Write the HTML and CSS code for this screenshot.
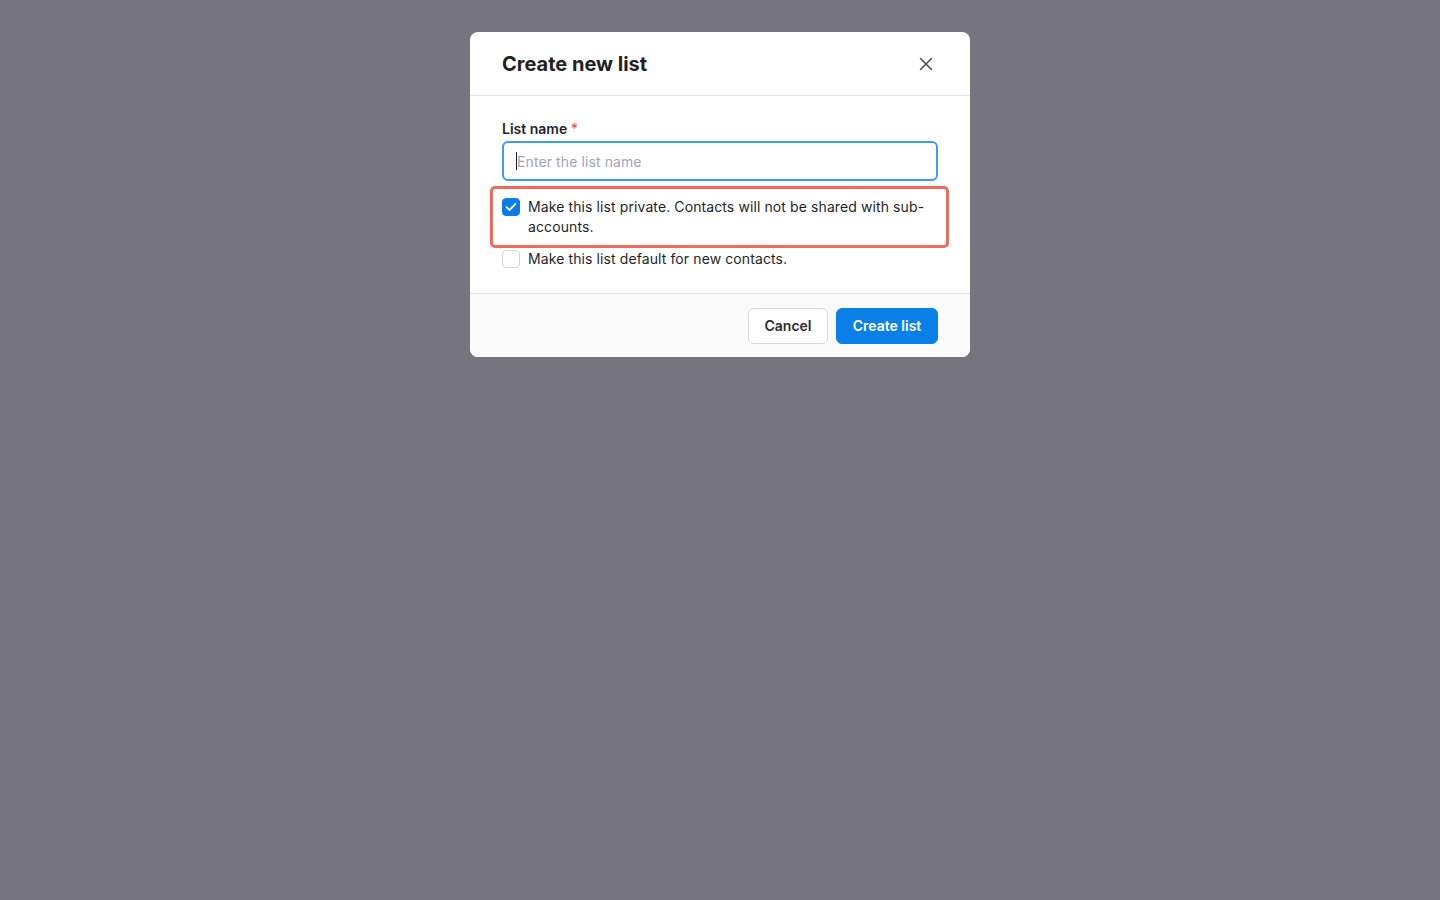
FILE: index.html
```html
<!DOCTYPE html>
<html lang="en">
<head>
<meta charset="utf-8">
<title>Create new list</title>
<link rel="stylesheet" href="styles.css">
</head>
<body>
<div class="overlay">
  <div class="modal">
    <div class="modal-header">
      <h2 class="modal-title">Create new list</h2>
      <button class="close-btn" aria-label="Close">
        <svg width="14" height="14" viewBox="0 0 14 14"><path d="M1.5 1.5 L12.5 12.5 M12.5 1.5 L1.5 12.5" stroke="#474761" stroke-width="1.5" stroke-linecap="round" fill="none"/></svg>
      </button>
    </div>
    <div class="modal-body">
      <label class="field-label">List name <span class="req">*</span></label>
      <div class="input"><span class="caret"></span><span class="placeholder">Enter the list name</span></div>
      <div class="options">
        <div class="check-row">
          <span class="box checked">
            <svg width="12" height="10" viewBox="0 0 12 10"><path d="M1.5 5.2 L4.5 8 L10.5 1.8" stroke="#fff" stroke-width="1.8" fill="none" stroke-linecap="round" stroke-linejoin="round"/></svg>
          </span>
          <span class="check-text">Make this list private. Contacts will not be shared with sub-accounts.</span>
          <span class="highlight"></span>
        </div>
        <div class="check-row">
          <span class="box"></span>
          <span class="check-text">Make this list default for new contacts.</span>
        </div>
      </div>
    </div>
    <div class="modal-footer">
      <button class="btn btn-secondary">Cancel</button>
      <button class="btn btn-primary">Create list</button>
    </div>
  </div>
</div>
</body>
</html>
```
FILE: styles.css
```css
* { box-sizing: border-box; }
html, body { margin: 0; padding: 0; }
body {
  font-family: Inter, "Noto Sans", "Liberation Sans", sans-serif;
  background: #75747f;
  width: 1440px;
  height: 900px;
  color: #1f1f29;
}
.overlay {
  display: flex;
  justify-content: center;
  align-items: flex-start;
  padding-top: 32px;
  height: 100%;
}
.modal {
  width: 500px;
  background: #fff;
  border-radius: 8px;
  display: flex;
  flex-direction: column;
}
.modal-header {
  height: 64px;
  border-bottom: 1px solid #e2e1ea;
  display: flex;
  align-items: center;
  justify-content: space-between;
  padding: 0 36px 0 32px;
}
.modal-title {
  margin: 0;
  font-size: 20px;
  font-weight: 700;
  color: #1f1f24;
}
.close-btn {
  border: 0;
  background: none;
  padding: 0;
  width: 16px;
  height: 16px;
  display: flex;
  align-items: center;
  justify-content: center;
}
.modal-body {
  padding: 24px 32px 24px;
}
.field-label {
  display: block;
  font-size: 14px;
  font-weight: 600;
  line-height: 17px;
  color: #1f1f29;
}
.req { color: #ef5a4b; font-weight: 500; }
.input {
  margin-top: 4px;
  height: 40px;
  border: 2px solid #3c9cf0;
  border-radius: 6px;
  display: flex;
  align-items: center;
  padding-left: 12px;
}
.caret {
  width: 1px;
  height: 18px;
  background: #1f1f29;
  margin-right: 0;
}
.placeholder {
  font-size: 14px;
  color: #a4a3bd;
  letter-spacing: 0.1px;
}
.options {
  margin-top: 16px;
  display: flex;
  flex-direction: column;
  gap: 12px;
}
.check-row {
  position: relative;
  display: flex;
  gap: 8px;
  align-items: flex-start;
}
.box {
  flex: none;
  width: 18px;
  height: 18px;
  border: 1px solid #d3d2e0;
  border-radius: 4px;
  background: #fff;
  display: flex;
  align-items: center;
  justify-content: center;
  margin-top: 1px;
}
.box.checked {
  background: #0a7ce8;
  border-color: #0a7ce8;
}
.check-text {
  font-size: 14px;
  line-height: 20px;
  color: #1f1f29;
  letter-spacing: 0.1px;
}
.highlight {
  position: absolute;
  left: -12px;
  right: -11px;
  top: -11px;
  bottom: -11px;
  border: 3px solid #ed6a5e;
  border-radius: 5px;
  pointer-events: none;
}
.modal-footer {
  height: 64px;
  border-top: 1px solid #e2e1ea;
  background: #fafafb;
  border-radius: 0 0 8px 8px;
  display: flex;
  justify-content: flex-end;
  align-items: center;
  gap: 8px;
  padding: 0 32px;
}
.btn {
  height: 36px;
  border-radius: 6px;
  font-family: inherit;
  font-size: 14px;
  font-weight: 600;
  padding: 0 15px;
}
.btn-secondary {
  width: 80px;
  background: #fff;
  border: 1px solid #d6d5e3;
  color: #2b2b38;
}
.btn-primary {
  width: 102px;
  background: #0a7fe8;
  border: 1px solid #0a7fe8;
  color: #fff;
}
```
